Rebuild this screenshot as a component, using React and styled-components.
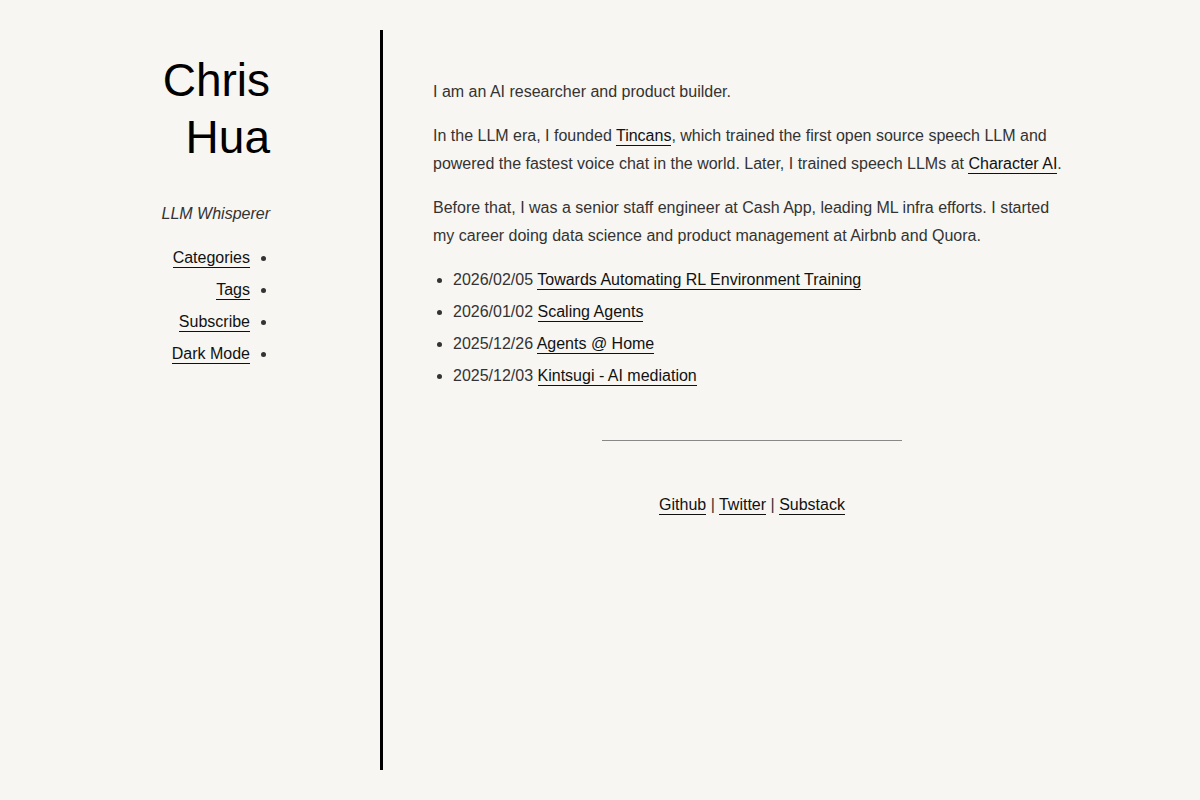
import { createGlobalStyle, styled } from "styled-components";

const GlobalStyle = createGlobalStyle`
  html, body {
    margin: 0;
    padding: 0;
    background: #f7f6f2;
  }
  body {
    font-family: "Liberation Sans", Arial, sans-serif;
    font-size: 16px;
    line-height: 28px;
    color: #333;
  }
`;

const posts = [
  { date: "2026/02/05", title: "Towards Automating RL Environment Training" },
  { date: "2026/01/02", title: "Scaling Agents" },
  { date: "2025/12/26", title: "Agents @ Home" },
  { date: "2025/12/03", title: "Kintsugi - AI mediation" },
];

const navLinks = ["Categories", "Tags", "Subscribe", "Dark Mode"];

const App = () => {
  return (
    <>
      <GlobalStyle />
      <Layout>
        <Sidebar>
          <Title>
            Chris
            <br />
            Hua
          </Title>
          <Tagline>LLM Whisperer</Tagline>
          <NavList>
            {navLinks.map((text) => (
              <li key={text}>
                <Link href="#">{text}</Link>
              </li>
            ))}
          </NavList>
        </Sidebar>
        <Main>
          <p>I am an AI researcher and product builder.</p>
          <p>
            In the LLM era, I founded <Link href="#">Tincans</Link>, which
            trained the first open source speech LLM and powered the fastest
            voice chat in the world. Later, I trained speech LLMs at{" "}
            <Link href="#">Character AI</Link>.
          </p>
          <p>
            Before that, I was a senior staff engineer at Cash App, leading ML
            infra efforts. I started my career doing data science and product
            management at Airbnb and Quora.
          </p>
          <PostList>
            {posts.map((post) => (
              <li key={post.date}>
                {post.date} <Link href="#">{post.title}</Link>
              </li>
            ))}
          </PostList>
          <Rule />
          <Footer>
            <Link href="#">Github</Link> | <Link href="#">Twitter</Link> |{" "}
            <Link href="#">Substack</Link>
          </Footer>
        </Main>
      </Layout>
    </>
  );
};

const Layout = styled.div`
  display: flex;
  padding: 30px 0;
  min-height: 740px;
`;

const Sidebar = styled.aside`
  flex: 0 0 380px;
  box-sizing: border-box;
  padding: 22px 110px 0 0;
  text-align: right;
`;

const Title = styled.h1`
  margin: 0;
  font-size: 46px;
  line-height: 57px;
  font-weight: 400;
  color: #000;
`;

const Tagline = styled.p`
  margin: 34px 0 16px;
  font-style: italic;
  color: #333;
`;

const NavList = styled.ul`
  direction: rtl;
  margin: 0;
  padding: 0 20px 0 0;
  list-style: disc;
  li + li {
    margin-top: 4px;
  }
`;

const Link = styled.a`
  color: #111;
  text-decoration: none;
  border-bottom: 1px solid #111;
  padding-bottom: 1px;
`;

const Main = styled.main`
  flex: 0 0 auto;
  width: 638px;
  border-left: 3px solid #000;
  padding: 48px 0 0 50px;
  p {
    margin: 0 0 16px;
  }
`;

const PostList = styled.ul`
  margin: 0;
  padding-left: 20px;
  li + li {
    margin-top: 4px;
  }
`;

const Rule = styled.hr`
  width: 300px;
  margin: 50px auto 50px;
  border: 0;
  border-top: 1px solid #888;
`;

const Footer = styled.div`
  text-align: center;
`;

export default App;
